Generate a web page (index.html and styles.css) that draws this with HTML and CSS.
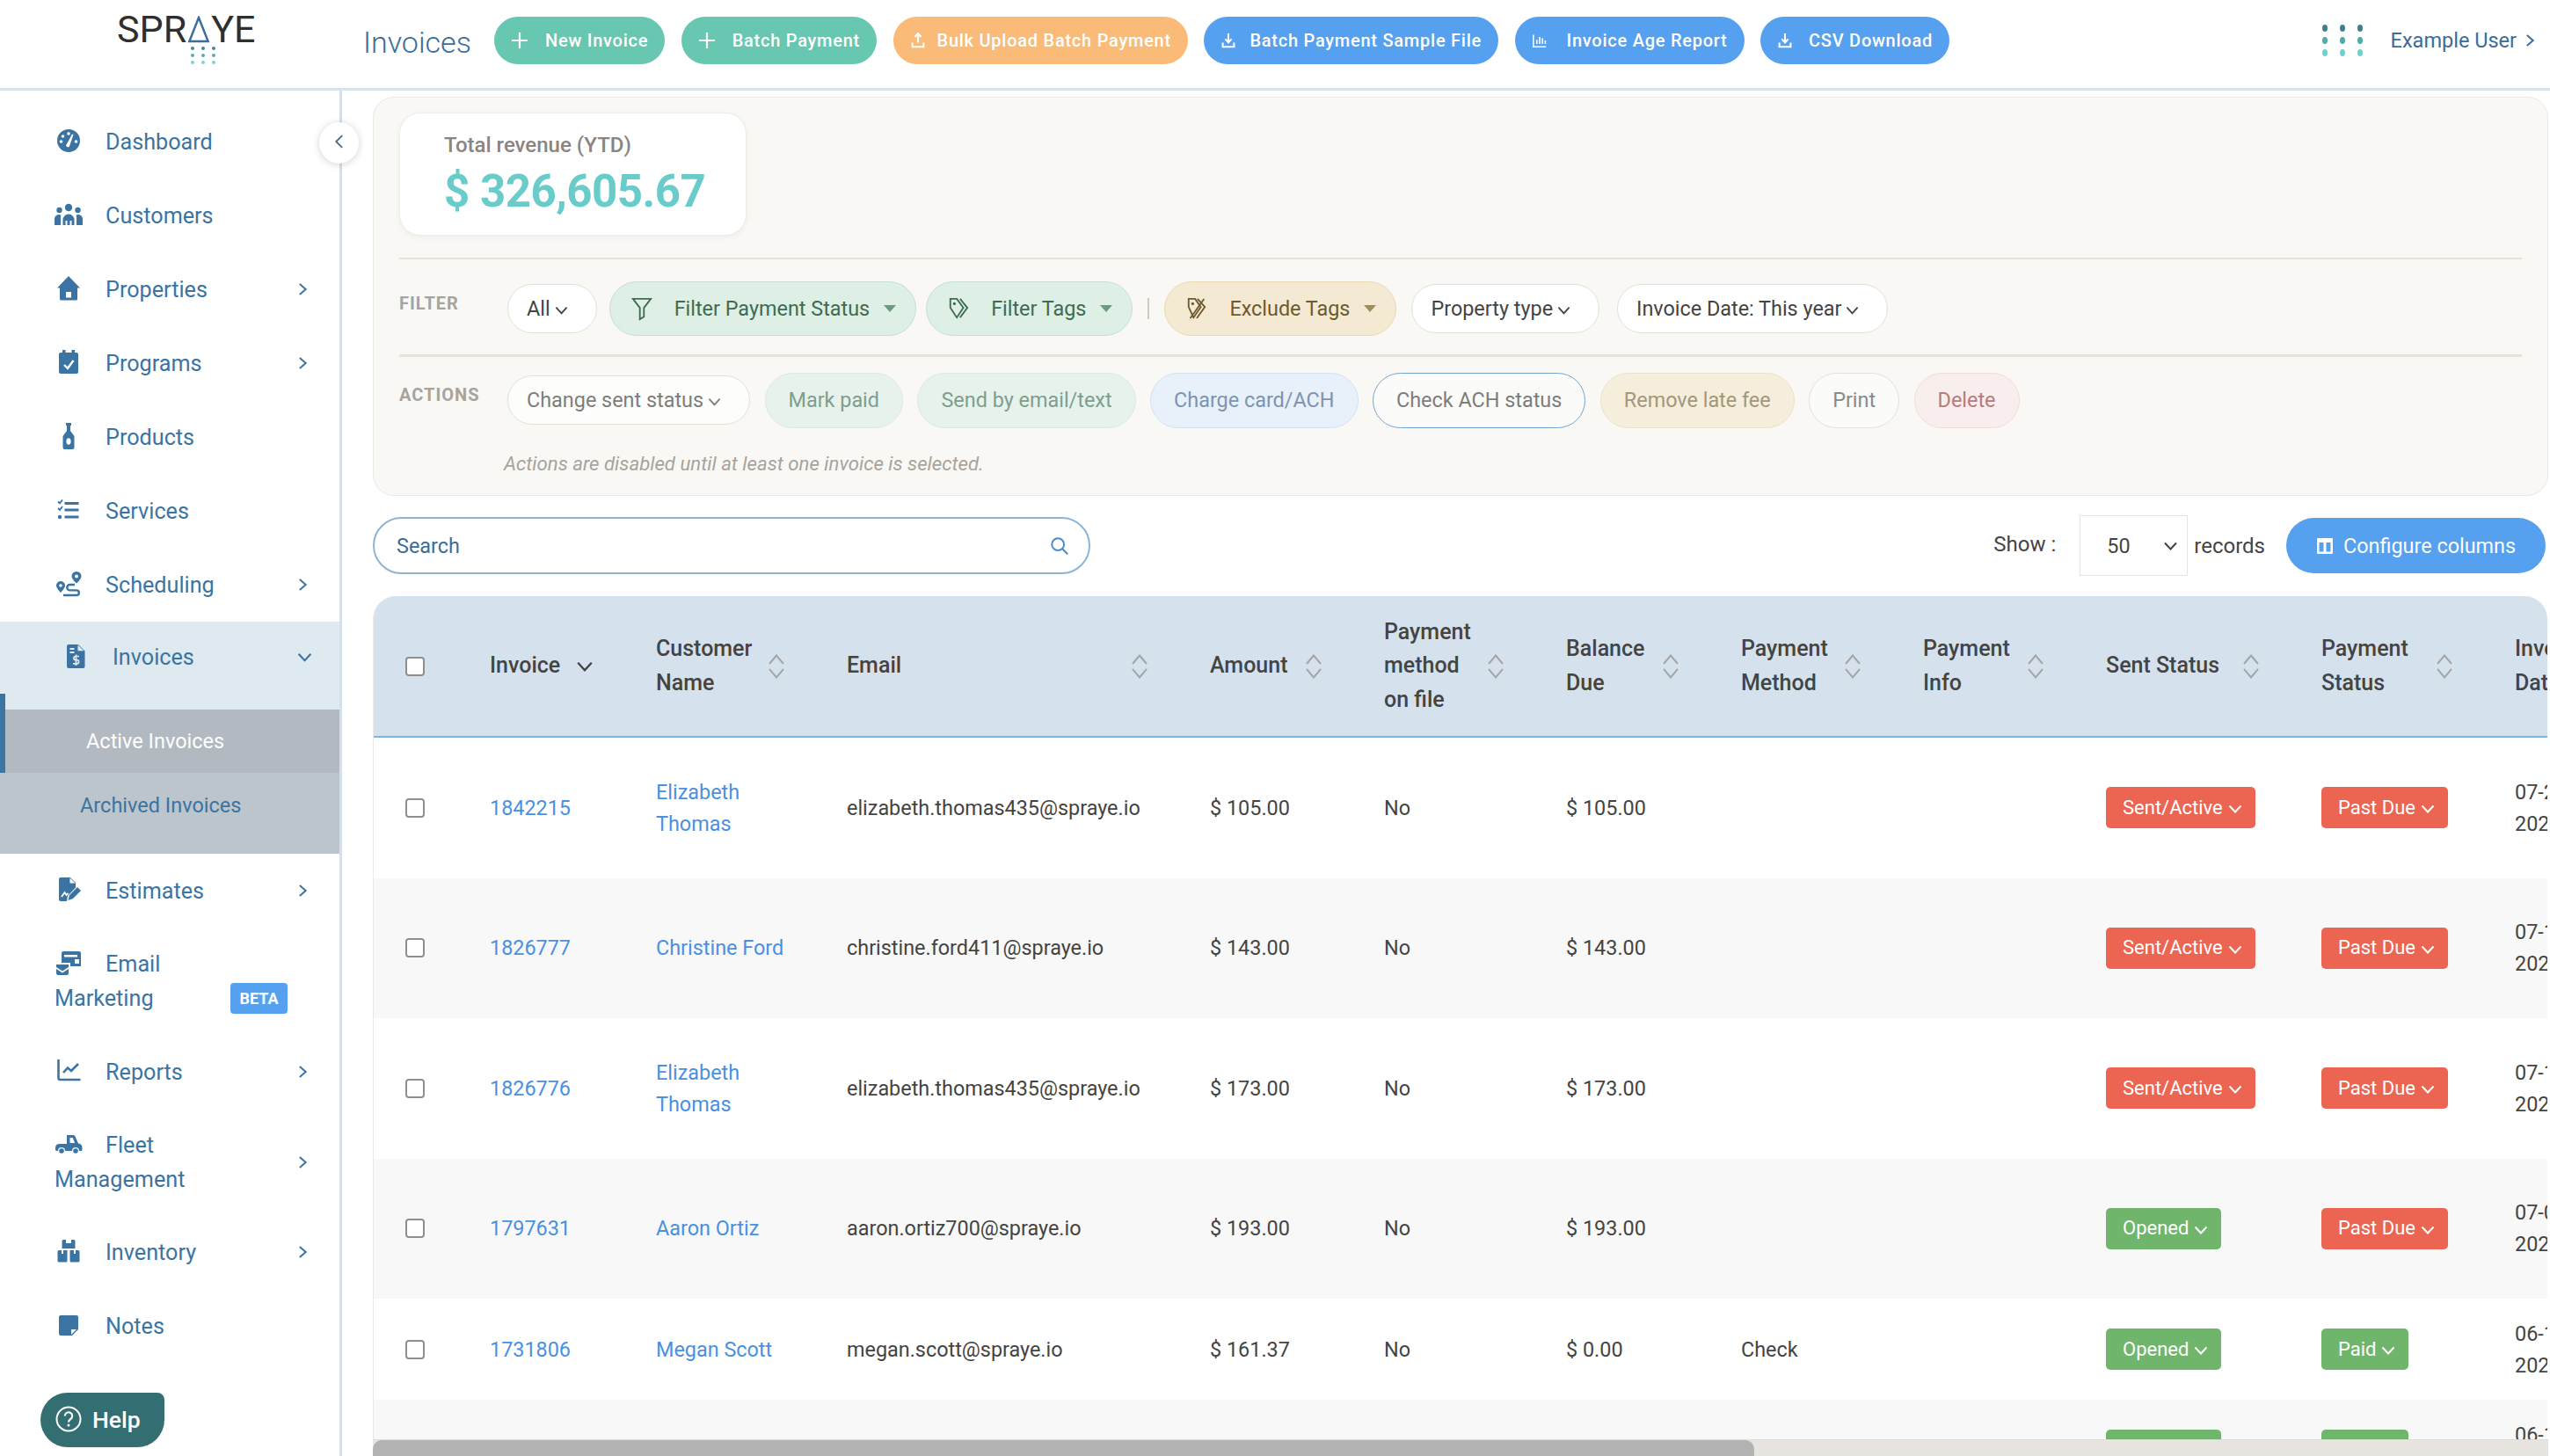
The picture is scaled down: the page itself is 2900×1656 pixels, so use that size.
FILE: index.html
```html
<!DOCTYPE html>
<html lang="en">
<head>
    <meta charset="UTF-8">
    <meta name="viewport" content="width=device-width, initial-scale=1.0">
    <title>Invoices</title>
    <link rel="stylesheet" href="styles.css">
</head>
<body>
    <!-- shared icons -->
    <svg class="sprite">
        <symbol id="chev-right" viewBox="0 0 12 16"><path d="M2 1.5 9.5 8 2 14.5" fill="none" stroke="currentColor" stroke-width="2.2"/></symbol>
        <symbol id="chev-down" viewBox="0 0 16 10"><path d="M1.5 1.5 8 8.5l6.5-7" fill="none" stroke="currentColor" stroke-width="2"/></symbol>
        <symbol id="sort" viewBox="0 0 20 28"><path d="M2 11 10 1.5l8 9.5M2 17l8 9.5 8-9.5" fill="none" stroke="currentColor" stroke-width="2"/></symbol>
        <symbol id="tray-down" viewBox="0 0 20 22"><path d="M10 1v12M5.500 9l4.500 5 4.500-5M2 14v6h16v-6" fill="none" stroke="currentColor" stroke-width="2.600"/></symbol>
        <symbol id="tray-up" viewBox="0 0 20 22"><path d="M10 14V2M5.500 6 10 1l4.500 5M2 14v6h16v-6" fill="none" stroke="currentColor" stroke-width="2.600"/></symbol>
        <symbol id="plus" viewBox="0 0 18 18"><path d="M9 0v18M0 9h18" fill="none" stroke="currentColor" stroke-width="2.200"/></symbol>
    </svg>

    <header class="topbar">
        <div class="logo">
            <div class="logo-word">SPR<svg class="logo-a" viewBox="0 0 26 32"><path d="M13 2 2 30h22z" fill="none" stroke="#3a6d9a" stroke-width="2.500"/></svg>YE</div>
            <svg class="logo-dots" viewBox="0 0 32 21">
                <g fill="#3f8a94"><circle cx="3" cy="3" r="2"/><circle cx="15" cy="3" r="2"/><circle cx="27" cy="3" r="2"/></g>
                <g fill="#55aeb0"><circle cx="3" cy="11" r="2"/><circle cx="15" cy="11" r="2"/><circle cx="27" cy="11" r="2"/></g>
                <g fill="#7fd2d0"><circle cx="3" cy="19" r="2"/><circle cx="15" cy="19" r="2"/><circle cx="27" cy="19" r="2"/></g>
            </svg>
        </div>
        <h1 class="page-title">Invoices</h1>
        <div class="top-actions">
            <button class="top-btn green"><svg class="top-icon"><use href="#plus"/></svg>New Invoice</button>
            <button class="top-btn green"><svg class="top-icon"><use href="#plus"/></svg>Batch Payment</button>
            <button class="top-btn orange"><svg class="top-icon small gap-14"><use href="#tray-up"/></svg>Bulk Upload Batch Payment</button>
            <button class="top-btn blue"><svg class="top-icon small gap-16"><use href="#tray-down"/></svg>Batch Payment Sample File</button>
            <button class="top-btn blue"><svg class="top-icon small gap-23" viewBox="0 0 20 22"><path d="M1 3v17h18M6 16v-6M10 16V6M14 16v-8M18 16v-5" fill="none" stroke="currentColor" stroke-width="2"/></svg>Invoice Age Report</button>
            <button class="top-btn blue"><svg class="top-icon small gap-19"><use href="#tray-down"/></svg>CSV Download</button>
        </div>
        <div class="user-menu">
            <svg class="user-dots" viewBox="0 0 50 36">
                <g fill="#3f7f8a"><ellipse cx="5" cy="4" rx="3" ry="4"/><ellipse cx="25" cy="4" rx="3" ry="4"/><ellipse cx="45" cy="4" rx="3" ry="4"/></g>
                <g fill="#4fa9ad"><ellipse cx="5" cy="18" rx="3" ry="4"/><ellipse cx="25" cy="18" rx="3" ry="4"/><ellipse cx="45" cy="18" rx="3" ry="4"/></g>
                <g fill="#6fd0cf"><ellipse cx="5" cy="32" rx="3" ry="4"/><ellipse cx="25" cy="32" rx="3" ry="4"/><ellipse cx="45" cy="32" rx="3" ry="4"/></g>
            </svg>
            <span>Example User</span>
            <svg class="user-chev"><use href="#chev-right"/></svg>
        </div>
    </header>

    <div class="layout">
        <nav class="sidebar">
            <button class="collapse"><svg class="collapse-chev" viewBox="0 0 12 18"><path d="M10 1.500 2.500 9l7.500 7.500" fill="none" stroke="currentColor" stroke-width="2"/></svg></button>

            <a class="nav-item">
                <span class="nav-label">
                    <svg class="nav-icon" viewBox="0 0 32 32"><circle cx="16" cy="16" r="13"/><g fill="#fff"><circle cx="16" cy="8" r="1.800"/><circle cx="9.500" cy="11" r="1.800"/><circle cx="7.500" cy="17" r="1.800"/><circle cx="24.500" cy="17" r="1.800"/><path d="M13 21.500 20 8.500l1.500.7-4.600 13.200a2.200 2.200 0 0 1-3.900-.9z"/></g></svg>Dashboard</span>
            </a>
            <a class="nav-item">
                <span class="nav-label">
                    <svg class="nav-icon" viewBox="0 0 32 32"><circle cx="16" cy="8" r="4.200"/><circle cx="5.500" cy="11" r="3.200"/><circle cx="26.500" cy="11" r="3.200"/><path d="M9.500 28v-6a6.500 6.500 0 0 1 13 0v6h-3v-5h-2v5h-3v-5h-2v5zM0 28v-7a5 5 0 0 1 7.500-4.300 9 9 0 0 0-.5 5V28zM32 28v-7a5 5 0 0 0-7.500-4.300 9 9 0 0 1 .5 5V28z"/></svg>Customers</span>
            </a>
            <a class="nav-item">
                <span class="nav-label">
                    <svg class="nav-icon" viewBox="0 0 32 32"><path d="M16 2 29 15.500h-3V28a1.500 1.500 0 0 1-1.500 1.500h-17A1.500 1.500 0 0 1 6 28V15.500H3z"/><rect x="13" y="20" width="6" height="6.500" fill="#fff"/></svg>Properties</span>
                <svg class="nav-chev"><use href="#chev-right"/></svg>
            </a>
            <a class="nav-item">
                <span class="nav-label">
                    <svg class="nav-icon" viewBox="0 0 32 32"><rect x="5" y="5" width="22" height="24" rx="2"/><rect x="9" y="2" width="3.500" height="6"/><rect x="19.500" y="2" width="3.500" height="6"/><path d="M11 19l4 4 6.500-9" fill="none" stroke="#fff" stroke-width="2.400"/></svg>Programs</span>
                <svg class="nav-chev"><use href="#chev-right"/></svg>
            </a>
            <a class="nav-item">
                <span class="nav-label">
                    <svg class="nav-icon" viewBox="0 0 32 32"><path d="M13 1h6v3h-1v6l4.500 6v13a2 2 0 0 1-2 2h-9a2 2 0 0 1-2-2V16L14 10V4h-1z"/><ellipse cx="16" cy="22" rx="2.600" ry="3.800" fill="#fff"/></svg>Products</span>
            </a>
            <a class="nav-item">
                <span class="nav-label">
                    <svg class="nav-icon" viewBox="0 0 32 32"><path d="M11.500 7h16v3h-16zM11.500 14.500h16v3h-16zM11.500 22.500h16v3h-16z"/><path d="M4 6.500l2 2 3-4M4 14l2 2 3-4" fill="none" stroke="currentColor" stroke-width="1.800"/><circle cx="6" cy="24" r="2.200"/></svg>Services</span>
            </a>
            <a class="nav-item">
                <span class="nav-label">
                    <svg class="nav-icon" viewBox="0 0 32 32"><path d="M25 2a5.500 5.500 0 0 0-5.500 5.500c0 3 5.500 8 5.500 8s5.500-5 5.500-8A5.500 5.500 0 0 0 25 2zm0 3.500a2 2 0 1 1 0 4 2 2 0 0 1 0-4zM7 13a5 5 0 0 0-5 5c0 3 5 8 5 8s5-5 5-8a5 5 0 0 0-5-5zm0 3.200a1.800 1.800 0 1 1 0 3.600 1.800 1.800 0 0 1 0-3.600z"/><path d="M23 17h-5.500a3.200 3.200 0 0 0 0 6.400H25a2.600 2.600 0 0 1 0 5.600H10" fill="none" stroke="currentColor" stroke-width="2.400"/></svg>Scheduling</span>
                <svg class="nav-chev"><use href="#chev-right"/></svg>
            </a>

            <div class="nav-group">
                <a class="nav-item group-head">
                    <span class="nav-label">
                        <svg class="nav-icon" viewBox="0 0 32 32"><path d="M8 3h11l7.500 7.500V28a2 2 0 0 1-2 2H8a2 2 0 0 1-2-2V5a2 2 0 0 1 2-2z"/><path d="M18.500 3.500v6.800h6.800z" fill="#dee9f0"/><path d="M9.500 8h5M9.500 12h5" stroke="#dee9f0" stroke-width="1.800"/><path d="M20 16.500h-4a2 2 0 0 0 0 4.200h1.500a2 2 0 0 1 0 4.200H13M16.500 14.500v12.500" fill="none" stroke="#dee9f0" stroke-width="1.700"/></svg>Invoices</span>
                    <svg class="nav-chev down"><use href="#chev-down"/></svg>
                </a>
                <a class="sub-item active">Active Invoices</a>
                <a class="sub-item">Archived Invoices</a>
            </div>

            <a class="nav-item">
                <span class="nav-label">
                    <svg class="nav-icon" viewBox="0 0 32 32"><path d="M5 4a2 2 0 0 1 2-2h11l6 6v5.500L15 23l-1 6H7a2 2 0 0 1-2-2z"/><path d="M17.500 2.500V8.500H23.500z" fill="#fff"/><path d="M8 24l3.500-5 2 3 2-2" fill="none" stroke="#fff" stroke-width="1.800"/><path d="M17 22l9-9 4 4-9 9-5.500 2z"/></svg>Estimates</span>
                <svg class="nav-chev"><use href="#chev-right"/></svg>
            </a>
            <a class="nav-item double">
                <span class="nav-label">
                    <svg class="nav-icon" viewBox="0 0 32 32"><path d="M8 3h20a2 2 0 0 1 2 2v15H18v-4H8V5a2 2 0 0 1 2-2z"/><path d="M5 6.500h2v2H5zM11 7h15v2.500H11z" fill="#fff"/><rect x="23" y="12" width="5" height="5" fill="#fff"/><path d="M2 18h14v3L9 25.500 2 21zM2 23l7 4.500 7-4.500v5a2 2 0 0 1-2 2H4a2 2 0 0 1-2-2z"/></svg>Email Marketing</span>
                <span class="beta">BETA</span>
            </a>
            <a class="nav-item">
                <span class="nav-label">
                    <svg class="nav-icon" viewBox="0 0 32 32"><path d="M4.500 3v21a2 2 0 0 0 2 2h23" fill="none" stroke="currentColor" stroke-width="2.600"/><path d="M10 18l5-5.500 4 3.500 8-8" fill="none" stroke="currentColor" stroke-width="2.600"/></svg>Reports</span>
                <svg class="nav-chev"><use href="#chev-right"/></svg>
            </a>
            <a class="nav-item double fleet">
                <span class="nav-label">
                    <svg class="nav-icon" viewBox="0 0 32 32"><path d="M1 21c0-3 1-4.500 4-5h9V6h7c1.200 0 2 .6 2.500 1.500L27 15.500c3 .5 4.500 2 4.500 5v2a1.500 1.500 0 0 1-1.500 1.500H2.500A1.500 1.500 0 0 1 1 22.500z"/><path d="M17.500 9h3.200l2.400 6h-5.600z" fill="#fff"/><circle cx="8" cy="24" r="4" fill="#fff"/><circle cx="24" cy="24" r="4" fill="#fff"/><circle cx="8" cy="24" r="2.800"/><circle cx="24" cy="24" r="2.800"/></svg>Fleet Management</span>
                <svg class="nav-chev"><use href="#chev-right"/></svg>
            </a>
            <a class="nav-item">
                <span class="nav-label">
                    <svg class="nav-icon" viewBox="0 0 32 32"><path d="M10 3h3v4h6V3h3a1.500 1.500 0 0 1 1.500 1.500V13H8.500V4.500A1.500 1.500 0 0 1 10 3zM5 15h3v4h2v-4h4.500V27a1.500 1.500 0 0 1-1.500 1.500H5A1.500 1.500 0 0 1 3.500 27V16.500A1.500 1.500 0 0 1 5 15zM19 15h3v4h2v-4h3a1.500 1.500 0 0 1 1.500 1.500V27a1.500 1.500 0 0 1-1.500 1.500h-8a1.500 1.500 0 0 1-1.500-1.500V15z"/></svg>Inventory</span>
                <svg class="nav-chev"><use href="#chev-right"/></svg>
            </a>
            <a class="nav-item">
                <span class="nav-label">
                    <svg class="nav-icon" viewBox="0 0 32 32"><path d="M7 5h18a2 2 0 0 1 2 2v14l-7 7H7a2 2 0 0 1-2-2V7a2 2 0 0 1 2-2z"/><path d="M19 21h6l-6 6z" fill="#fff"/></svg>Notes</span>
            </a>

            <button class="help-btn"><svg class="help-icon" viewBox="0 0 30 30"><circle cx="15" cy="15" r="13.500" fill="none" stroke="currentColor" stroke-width="2"/><path d="M10.800 11.500a4.200 4.200 0 1 1 6.500 3.500c-1.600 1-2.300 1.700-2.300 3.500" fill="none" stroke="currentColor" stroke-width="2.200"/><circle cx="15" cy="22" r="1.500" fill="currentColor"/></svg>Help</button>
        </nav>

        <main class="content">
            <section class="panel">
                <div class="revenue-card">
                    <div class="revenue-label">Total revenue (YTD)</div>
                    <div class="revenue-value">$ 326,605.67</div>
                </div>

                <div class="panel-row filter-row">
                    <span class="row-label">FILTER</span>
                    <button class="chip plain">All<svg class="chip-chev"><use href="#chev-down"/></svg></button>
                    <button class="chip mint tall icon-chip first-mint">
                        <svg class="chip-icon" viewBox="0 0 26 30"><path d="M2 3h22l-8.500 11v11l-5 3V14z" fill="none" stroke="currentColor" stroke-width="2"/></svg>Filter Payment Status<i class="caret"></i>
                    </button>
                    <button class="chip mint tall icon-chip">
                        <svg class="chip-icon" viewBox="0 0 26 30"><path d="M3 3h8l8 11-8 12-8-12z" fill="none" stroke="currentColor" stroke-width="2"/><path d="M15 3l9 11-9 12" fill="none" stroke="currentColor" stroke-width="2"/><circle cx="8" cy="9" r="1.800" fill="currentColor"/></svg>Filter Tags<i class="caret"></i>
                    </button>
                    <span class="chip-sep"></span>
                    <button class="chip sand tall icon-chip">
                        <svg class="chip-icon" viewBox="0 0 26 30"><path d="M3 3h8l7 10-9 13-6-13zM14 3l9 10-10 14" fill="none" stroke="currentColor" stroke-width="2"/><path d="M5 27 22 3" stroke="currentColor" stroke-width="2"/><circle cx="8" cy="9" r="1.800" fill="currentColor"/></svg>Exclude Tags<i class="caret"></i>
                    </button>
                    <button class="chip plain">Property type<svg class="chip-chev"><use href="#chev-down"/></svg></button>
                    <button class="chip plain">Invoice Date: This year<svg class="chip-chev"><use href="#chev-down"/></svg></button>
                </div>

                <div class="panel-row actions-row">
                    <span class="row-label">ACTIONS</span>
                    <button class="chip plain muted">Change sent status<svg class="chip-chev"><use href="#chev-down"/></svg></button>
                    <button class="chip action act-green">Mark paid</button>
                    <button class="chip action act-green">Send by email/text</button>
                    <button class="chip action act-blue">Charge card/ACH</button>
                    <button class="chip action act-outline">Check ACH status</button>
                    <button class="chip action act-sand">Remove late fee</button>
                    <button class="chip action act-plain">Print</button>
                    <button class="chip action act-red">Delete</button>
                </div>
                <p class="hint">Actions are disabled until at least one invoice is selected.</p>
            </section>

            <div class="toolbar">
                <div class="search">
                    <span>Search</span>
                    <svg class="search-icon" viewBox="0 0 24 24"><circle cx="10" cy="10" r="7.500" fill="none" stroke="currentColor" stroke-width="2.200"/><path d="M15.500 15.500 22 22" stroke="currentColor" stroke-width="2.400"/></svg>
                </div>
                <div class="records">
                    <span class="show">Show :</span>
                    <div class="page-size">50<svg class="size-chev"><use href="#chev-down"/></svg></div>
                    <span>records</span>
                </div>
                <button class="config-btn">
                    <svg class="config-icon" viewBox="0 0 20 20"><path d="M2 1h16a1 1 0 0 1 1 1v16a1 1 0 0 1-1 1H2a1 1 0 0 1-1-1V2a1 1 0 0 1 1-1zm1.500 5v10.500h5V6zm8 0v10.500h5V6z" fill="currentColor" fill-rule="evenodd"/></svg>Configure columns
                </button>
            </div>

            <div class="table-wrap">
                <table class="invoices">
                    <colgroup>
                        <col class="c-check"><col class="c-invoice"><col class="c-customer"><col class="c-email"><col class="c-amount"><col class="c-onfile"><col class="c-balance"><col class="c-method"><col class="c-info"><col class="c-sent"><col class="c-status"><col class="c-date">
                    </colgroup>
                    <thead>
                        <tr>
                            <th class="check-cell"><input type="checkbox"></th>
                            <th><div class="th-inner"><span>Invoice</span><svg class="sort-one"><use href="#chev-down"/></svg></div></th>
                            <th><div class="th-inner"><span>Customer<br>Name</span><svg class="sort"><use href="#sort"/></svg></div></th>
                            <th><div class="th-inner"><span>Email</span><svg class="sort"><use href="#sort"/></svg></div></th>
                            <th><div class="th-inner"><span>Amount</span><svg class="sort"><use href="#sort"/></svg></div></th>
                            <th><div class="th-inner"><span>Payment<br>method<br>on file</span><svg class="sort"><use href="#sort"/></svg></div></th>
                            <th><div class="th-inner"><span>Balance<br>Due</span><svg class="sort"><use href="#sort"/></svg></div></th>
                            <th><div class="th-inner"><span>Payment<br>Method</span><svg class="sort"><use href="#sort"/></svg></div></th>
                            <th><div class="th-inner"><span>Payment<br>Info</span><svg class="sort"><use href="#sort"/></svg></div></th>
                            <th><div class="th-inner"><span>Sent Status</span><svg class="sort"><use href="#sort"/></svg></div></th>
                            <th><div class="th-inner"><span>Payment<br>Status</span><svg class="sort"><use href="#sort"/></svg></div></th>
                            <th><span>Invoice<br>Date</span></th>
                        </tr>
                    </thead>
                    <tbody>
                        <tr>
                            <td class="check-cell"><input type="checkbox"></td>
                            <td><a class="link">1842215</a></td>
                            <td><a class="link">Elizabeth<br>Thomas</a></td>
                            <td>elizabeth.thomas435@spraye.io</td>
                            <td>$ 105.00</td>
                            <td>No</td>
                            <td>$ 105.00</td>
                            <td></td>
                            <td></td>
                            <td><span class="badge red">Sent/Active<svg class="badge-chev"><use href="#chev-down"/></svg></span></td>
                            <td><span class="badge red">Past Due<svg class="badge-chev"><use href="#chev-down"/></svg></span></td>
                            <td>07-21-<br>2021</td>
                        </tr>
                        <tr>
                            <td class="check-cell"><input type="checkbox"></td>
                            <td><a class="link">1826777</a></td>
                            <td><a class="link">Christine Ford</a></td>
                            <td>christine.ford411@spraye.io</td>
                            <td>$ 143.00</td>
                            <td>No</td>
                            <td>$ 143.00</td>
                            <td></td>
                            <td></td>
                            <td><span class="badge red">Sent/Active<svg class="badge-chev"><use href="#chev-down"/></svg></span></td>
                            <td><span class="badge red">Past Due<svg class="badge-chev"><use href="#chev-down"/></svg></span></td>
                            <td>07-15-<br>2021</td>
                        </tr>
                        <tr>
                            <td class="check-cell"><input type="checkbox"></td>
                            <td><a class="link">1826776</a></td>
                            <td><a class="link">Elizabeth<br>Thomas</a></td>
                            <td>elizabeth.thomas435@spraye.io</td>
                            <td>$ 173.00</td>
                            <td>No</td>
                            <td>$ 173.00</td>
                            <td></td>
                            <td></td>
                            <td><span class="badge red">Sent/Active<svg class="badge-chev"><use href="#chev-down"/></svg></span></td>
                            <td><span class="badge red">Past Due<svg class="badge-chev"><use href="#chev-down"/></svg></span></td>
                            <td>07-15-<br>2021</td>
                        </tr>
                        <tr>
                            <td class="check-cell"><input type="checkbox"></td>
                            <td><a class="link">1797631</a></td>
                            <td><a class="link">Aaron Ortiz</a></td>
                            <td>aaron.ortiz700@spraye.io</td>
                            <td>$ 193.00</td>
                            <td>No</td>
                            <td>$ 193.00</td>
                            <td></td>
                            <td></td>
                            <td><span class="badge green">Opened<svg class="badge-chev"><use href="#chev-down"/></svg></span></td>
                            <td><span class="badge red">Past Due<svg class="badge-chev"><use href="#chev-down"/></svg></span></td>
                            <td>07-06-<br>2021</td>
                        </tr>
                        <tr class="short">
                            <td class="check-cell"><input type="checkbox"></td>
                            <td><a class="link">1731806</a></td>
                            <td><a class="link">Megan Scott</a></td>
                            <td>megan.scott@spraye.io</td>
                            <td>$ 161.37</td>
                            <td>No</td>
                            <td>$ 0.00</td>
                            <td>Check</td>
                            <td></td>
                            <td><span class="badge green">Opened<svg class="badge-chev"><use href="#chev-down"/></svg></span></td>
                            <td><span class="badge green">Paid<svg class="badge-chev"><use href="#chev-down"/></svg></span></td>
                            <td>06-15-<br>2021</td>
                        </tr>
                        <tr class="short">
                            <td class="check-cell"><input type="checkbox"></td>
                            <td><a class="link">1731805</a></td>
                            <td><a class="link">Megan Scott</a></td>
                            <td>megan.scott@spraye.io</td>
                            <td>$ 161.37</td>
                            <td>No</td>
                            <td>$ 0.00</td>
                            <td>Check</td>
                            <td></td>
                            <td><span class="badge green">Opened<svg class="badge-chev"><use href="#chev-down"/></svg></span></td>
                            <td><span class="badge green">Paid<svg class="badge-chev"><use href="#chev-down"/></svg></span></td>
                            <td>06-15-<br>2021</td>
                        </tr>
                    </tbody>
                </table>
            </div>
            <div class="hscroll"><div class="hscroll-thumb"></div></div>
        </main>
    </div>
</body>
</html>
```
FILE: styles.css
```css
* {
    box-sizing: border-box;
}

html, body {
    margin: 0;
    padding: 0;
    width: 100%;
    height: 100vh;
    overflow: hidden;
    background-color: #fff;
    font-family: 'Roboto', 'Liberation Sans', sans-serif;
    font-size: 25px;
    color: #444;
}

button {
    font-family: inherit;
    cursor: pointer;
}

.sprite {
    display: none;
}

/* top bar */
.topbar {
    display: flex;
    align-items: center;
    height: 103px;
    border-bottom: 3px solid #d8e3ec;
    padding: 0 17px 8px 133px;
}

.logo {
    width: 280px;
    flex-shrink: 0;
    margin-top: -4px;
}

.logo-word {
    display: flex;
    align-items: center;
    font-size: 43px;
    line-height: 36px;
    font-weight: 400;
    color: #2f2f2f;
    letter-spacing: 0;
}

.logo-a {
    width: 26px;
    height: 31px;
    margin: 0 1px;
}

.logo-dots {
    display: block;
    width: 32px;
    height: 21px;
    margin: 1px 0 0 83px;
}

.page-title {
    width: 149px;
    flex-shrink: 0;
    margin: 4px 0 0;
    font-size: 34px;
    font-weight: 300;
    color: #3a6d9a;
}

.top-actions {
    display: flex;
    gap: 18.500px;
}

.top-btn {
    display: flex;
    align-items: center;
    height: 54px;
    padding: 0 19px 0 20px;
    border: 0;
    border-radius: 27px;
    color: #fff;
    font-size: 20px;
    font-weight: 500;
    letter-spacing: 0.750px;
}

.top-btn.green { background-color: #67c7b0; }
.top-btn.orange { background-color: #f9bb77; }
.top-btn.blue { background-color: #55a0ef; }

.top-icon {
    width: 18px;
    height: 18px;
    margin-right: 20px;
}

.top-icon.small {
    width: 16px;
    height: 18px;
}

.gap-14 { margin-right: 14px; }
.gap-16 { margin-right: 16px; }
.gap-19 { margin-right: 19px; }
.gap-23 { margin-right: 23px; }

.user-menu {
    display: flex;
    align-items: center;
    margin-left: auto;
    color: #3a6d9a;
    font-size: 23.500px;
}

.user-dots {
    width: 50px;
    height: 36px;
    margin-right: 30px;
}

.user-chev {
    width: 11px;
    height: 16px;
    margin-left: 10px;
}

.layout {
    display: flex;
    height: 1553px;
}

/* sidebar */
.sidebar {
    position: relative;
    width: 389px;
    flex-shrink: 0;
    padding-top: 16px;
    border-right: 3px solid #d5e0ea;
    color: #3b74a2;
}

.collapse {
    position: absolute;
    top: 36px;
    right: -22px;
    width: 45px;
    height: 47px;
    padding: 0;
    border: 0;
    border-radius: 50%;
    background-color: #fff;
    color: #4a6b86;
    box-shadow: 0 1px 8px rgba(0, 0, 0, 0.18);
}

.collapse-chev {
    width: 11px;
    height: 18px;
}

.nav-item {
    display: flex;
    align-items: center;
    justify-content: space-between;
    height: 84px;
    padding: 0 36px 0 62px;
    line-height: 39px;
    font-size: 25.200px;
}

.nav-item.double {
    height: 122px;
}

.nav-item.fleet {
    height: 121px;
}

.nav-label {
    width: 250px;
}

.nav-icon {
    width: 32px;
    height: 32px;
    margin: -6px 26px 0 0;
    vertical-align: middle;
    fill: currentColor;
}

.nav-chev {
    width: 11px;
    height: 16px;
    flex-shrink: 0;
}

.nav-chev.down {
    width: 17px;
    height: 11px;
    margin-right: -5px;
}

.nav-group {
    background-color: #dee9f0;
}

.group-head {
    height: 100px;
    padding-left: 70px;
    padding-bottom: 20px;
}

.sub-item {
    position: relative;
    display: block;
    height: 92px;
    padding: 17px 0 0 91px;
    line-height: 40px;
    font-size: 23.500px;
    background-color: #bcc4cc;
}

.sub-item.active {
    height: 72px;
    padding: 16px 0 0 98px;
    background-color: #b2b9c0;
    color: #fff;
}

/* accent sits over the sub menu edge */
.sub-item.active::before {
    content: '';
    position: absolute;
    left: 0;
    bottom: 0;
    width: 6px;
    height: 90px;
    background-color: #3a75a3;
}

.beta {
    width: 65px;
    height: 35px;
    margin: 38px 23px 0 0;
    flex-shrink: 0;
    border-radius: 4px;
    background-color: #55a0ef;
    color: #fff;
    font-size: 18px;
    font-weight: 700;
    line-height: 35px;
    text-align: center;
}

.help-btn {
    position: absolute;
    left: 46px;
    bottom: 10px;
    display: flex;
    align-items: center;
    width: 141px;
    height: 62px;
    padding: 0 0 2px 17px;
    border: 0;
    border-radius: 31px 8px 31px 31px;
    background-color: #336e72;
    color: #fff;
    font-size: 26.500px;
    font-weight: 500;
}

.help-icon {
    width: 30px;
    height: 30px;
    margin-right: 12px;
}

/* main column */
.content {
    flex: 1;
    min-width: 0;
    padding: 7px 2px 0 35px;
}

.panel {
    height: 454px;
    padding: 17px 29px 0 29px;
    background-color: #faf8f5;
    border: 1px solid #ece8e2;
    border-radius: 24px;
}

.revenue-card {
    width: 395px;
    height: 140px;
    padding: 21px 0 0 50px;
    background-color: #fff;
    border: 1px solid #f0ede8;
    border-radius: 24px;
    box-shadow: 0 2px 6px rgba(0, 0, 0, 0.05);
}

.revenue-label {
    color: #8a8580;
    font-size: 24px;
    font-weight: 500;
    line-height: 30px;
}

.revenue-value {
    margin-top: 8px;
    color: #6accca;
    font-size: 51px;
    font-weight: 700;
    line-height: 60px;
    letter-spacing: -0.500px;
}

.panel-row {
    display: flex;
    align-items: center;
    gap: 11px;
}

.filter-row {
    height: 113px;
    margin-top: 25px;
    border-top: 2px solid #e6e2dc;
    border-bottom: 3px solid #e6e2dc;
    padding-top: 3px;
}

.actions-row {
    height: 92px;
    padding-top: 6px;
}

.row-label {
    width: 112px;
    flex-shrink: 0;
    margin-bottom: 12px;
    color: #a8a39c;
    font-size: 20px;
    font-weight: 700;
    letter-spacing: 1px;
}

.chip {
    display: flex;
    align-items: center;
    height: 56px;
    padding: 0 32px 0 21px;
    border: 1px solid #e3dfd8;
    border-radius: 28px;
    background-color: #fff;
    color: #444;
    font-size: 23.400px;
    white-space: nowrap;
}

.chip.plain + .chip.plain {
    margin-left: 9px;
}

.chip.muted {
    background-color: #fdfdfb;
    color: #7d7d7a;
}

.chip.tall {
    height: 62px;
    border-radius: 31px;
}

.chip.mint {
    background-color: #deefe6;
    border-color: #c5e0d2;
    color: #3f6b52;
}

.chip.mint.first-mint {
    margin-left: 3px;
}

.chip.sand {
    margin-right: 6px;
    background-color: #f4ead4;
    border-color: #ead9b0;
    color: #6d5a30;
}

.chip.icon-chip {
    padding: 0 22px 0 24px;
}

.chip-icon {
    width: 24px;
    height: 28px;
    margin-right: 25px;
    flex-shrink: 0;
}

.chip-chev {
    width: 15px;
    height: 10px;
    margin-left: 5px;
    margin-top: 4px;
}

.caret {
    width: 0;
    height: 0;
    margin-left: 16px;
    border-left: 7px solid transparent;
    border-right: 7px solid transparent;
    border-top: 8px solid #6a9a80;
}

.chip.sand .caret {
    border-top-color: #a08d5d;
}

.chip-sep {
    width: 2px;
    height: 24px;
    margin: 0 6px;
    background-color: #cfcbc5;
}

.chip.action {
    height: 63px;
    padding: 0 26px;
    border-radius: 31.500px;
    margin-left: 5.500px;
}

.act-green { background-color: #e7f2ec; border-color: #d8ebe0; color: #7d9f8c; }
.act-blue { background-color: #e8f0f9; border-color: #d2e3f3; color: #7c95b2; }
.act-outline { background-color: #fbfbfa; border-color: #75a5cc; color: #7d7d7d; }
.act-sand { background-color: #f5eedd; border-color: #ece2c8; color: #a3977a; }
.act-plain { background-color: #fbfbf9; border-color: #e4e1dc; color: #8a8a8a; }
.act-red { background-color: #f9eeee; border-color: #f0dcdc; color: #b87a7a; }

.hint {
    margin: 16px 0 0 119px;
    color: #a8a39c;
    font-size: 22.200px;
    font-style: italic;
}

/* search and page size */
.toolbar {
    display: flex;
    align-items: center;
    height: 69px;
    margin-top: 22px;
    padding-right: 3px;
}

.search {
    display: flex;
    align-items: center;
    justify-content: space-between;
    width: 816px;
    height: 65px;
    padding: 0 22px 0 25px;
    border: 2px solid #8db4d4;
    border-radius: 33px;
    color: #3a6d9a;
    font-size: 23.400px;
}

.search-icon {
    width: 22px;
    height: 22px;
    color: #4a8cd0;
}

.records {
    display: flex;
    align-items: center;
    margin-left: auto;
    color: #444;
    font-size: 24px;
}

.show {
    margin-right: 27px;
    margin-bottom: 4px;
}

.page-size {
    display: flex;
    align-items: center;
    justify-content: space-between;
    width: 123px;
    height: 69px;
    margin-right: 7px;
    padding: 0 10px 0 30px;
    border: 1px solid #e4e4e4;
    font-size: 23.400px;
}

.size-chev {
    width: 17px;
    height: 10px;
}

.config-btn {
    display: flex;
    align-items: center;
    width: 295px;
    height: 63px;
    margin-left: 24px;
    padding: 0 0 0 34px;
    border: 0;
    border-radius: 32px;
    background-color: #55a0ef;
    color: #fff;
    font-size: 23.400px;
}

.config-icon {
    width: 20px;
    height: 20px;
    margin-right: 11px;
}

/* table */
.table-wrap {
    width: 2473px;
    height: 959px;
    margin-top: 23px;
    overflow: hidden;
    border-left: 1px solid #e8e8e8;
    border-radius: 26px 26px 0 0;
}

.invoices {
    width: 2635px;
    table-layout: fixed;
    border-collapse: separate;
    border-spacing: 0;
}

.c-check { width: 132px; }
.c-invoice { width: 189px; }
.c-customer { width: 217px; }
.c-email { width: 413px; }
.c-amount { width: 198px; }
.c-onfile { width: 207px; }
.c-balance { width: 199px; }
.c-method { width: 207px; }
.c-info { width: 208px; }
.c-sent { width: 245px; }
.c-status { width: 220px; }
.c-date { width: 200px; }

.invoices th {
    height: 161px;
    padding: 0 70px 0 0;
    background-color: #d5e2ee;
    border-bottom: 2px solid #7fb2e8;
    color: #444;
    font-size: 25px;
    font-weight: 500;
    line-height: 38.500px;
    text-align: left;
}

.th-inner {
    display: flex;
    align-items: center;
    justify-content: space-between;
}

.sort {
    width: 20px;
    height: 28px;
    flex-shrink: 0;
    color: #a5a5a5;
}

.sort-one {
    width: 22px;
    height: 12px;
    flex-shrink: 0;
    color: #444;
}

.invoices td {
    height: 159.500px;
    padding: 0;
    font-size: 23.400px;
    line-height: 36px;
    color: #444;
    vertical-align: middle;
}

.invoices tbody tr:nth-child(even) td {
    background-color: #f8f8f8;
}

.invoices tr.short td {
    height: 115px;
}

.invoices .check-cell {
    padding: 0 0 0 36px;
}

input[type="checkbox"] {
    display: block;
    width: 22px;
    height: 22px;
    margin: 0;
    appearance: none;
    background-color: #fff;
    border: 2px solid #8f8f8f;
    border-radius: 4px;
}

.link {
    color: #4a90e2;
}

.badge {
    display: inline-flex;
    align-items: center;
    height: 47px;
    padding: 0 15px 0 19px;
    border-radius: 5px;
    color: #fff;
    font-size: 22px;
}

.badge.red { background-color: #ec6553; }
.badge.green { background-color: #70b56c; }

.badge-chev {
    width: 16px;
    height: 10px;
    margin-left: 6px;
    margin-top: 3px;
}

.hscroll {
    height: 19px;
    background-color: #e8e5e0;
    border-top: 1px solid #dedbd6;
}

.hscroll-thumb {
    width: 1571px;
    height: 18px;
    background-color: #b3b3b3;
    border-radius: 10px 10px 0 0;
}
```
